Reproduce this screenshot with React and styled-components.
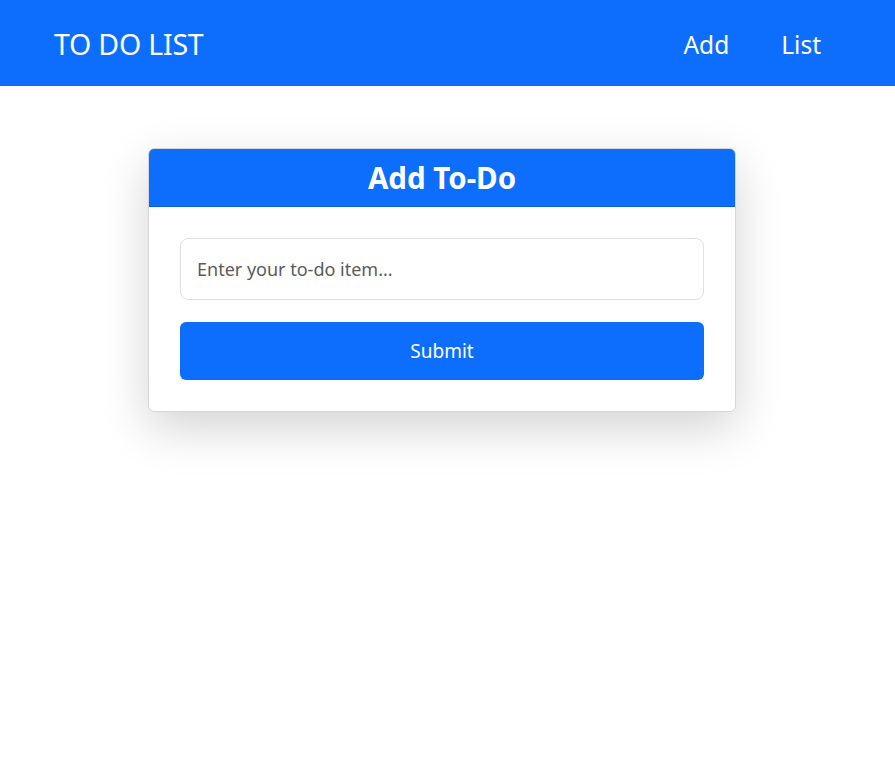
import React, { useState } from "react";
import styled, { createGlobalStyle } from "styled-components";

const GlobalStyle = createGlobalStyle`
  * {
    box-sizing: border-box;
  }

  body {
    margin: 0;
    background: #ffffff;
    font-family: "Noto Sans", "Open Sans", sans-serif;
    color: #212529;
  }
`;

const Page = styled.div`
  min-height: 100vh;
  background: #ffffff;
`;

const NavBar = styled.nav`
  display: flex;
  align-items: center;
  justify-content: space-between;
  height: 86px;
  padding: 2px 74px 0 54px;
  background-color: #0d6efd;
`;

const Brand = styled.a`
  color: #ffffff;
  font-size: 28.5px;
  text-decoration: none;
  letter-spacing: -0.2px;
`;

const NavLinks = styled.div`
  display: flex;
  gap: 52px;
`;

const NavLink = styled.a`
  color: #ffffff;
  font-size: 24.5px;
  text-decoration: none;
  cursor: pointer;
`;

const Main = styled.main`
  padding: 62px 0 80px 148px;
`;

const Card = styled.div`
  width: 588px;
  border: 1px solid #d3d6da;
  border-radius: 6px;
  overflow: hidden;
  background: #ffffff;
  box-shadow: 0 16px 48px rgba(0, 0, 0, 0.175);
`;

const CardHeader = styled.div`
  display: flex;
  align-items: center;
  justify-content: center;
  height: 58px;
  background-color: #0d6efd;
  border-bottom: 1px solid #0b5ed7;

  h2 {
    margin: 0;
    color: #ffffff;
    font-size: 29.5px;
    font-weight: 700;
  }
`;

const CardBody = styled.form`
  display: flex;
  flex-direction: column;
  gap: 22px;
  padding: 31px;
`;

const Input = styled.input`
  height: 62px;
  padding: 0 16px;
  border: 1px solid #dee2e6;
  border-radius: 8px;
  font-family: inherit;
  font-size: 18px;
  color: #212529;

  &::placeholder {
    color: #595c5f;
  }
`;

const SubmitButton = styled.button`
  height: 58px;
  border: none;
  border-radius: 6px;
  background-color: #0d6efd;
  color: #ffffff;
  font-family: inherit;
  font-size: 19px;
  cursor: pointer;
`;

export default function App() {
  const [todo, setTodo] = useState("");

  const handleSubmit = (e) => {
    e.preventDefault();
    setTodo("");
  };

  return (
    <Page>
      <GlobalStyle />
      <NavBar>
        <Brand>TO DO LIST</Brand>
        <NavLinks>
          <NavLink>Add</NavLink>
          <NavLink>List</NavLink>
        </NavLinks>
      </NavBar>
      <Main>
        <Card>
          <CardHeader>
            <h2>Add To-Do</h2>
          </CardHeader>
          <CardBody onSubmit={handleSubmit}>
            <Input
              type="text"
              placeholder="Enter your to-do item..."
              value={todo}
              onChange={(e) => setTodo(e.target.value)}
            />
            <SubmitButton type="submit">Submit</SubmitButton>
          </CardBody>
        </Card>
      </Main>
    </Page>
  );
}
